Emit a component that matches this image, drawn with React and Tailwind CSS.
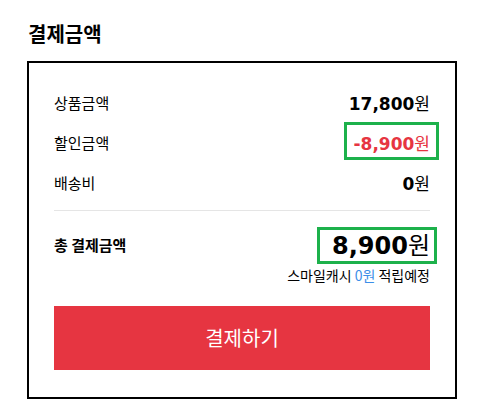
export default function App() {
  const kr = { fontFamily: '"Noto Sans CJK KR", "Noto Sans", sans-serif' };
  const num = { fontFamily: '"DejaVu Sans", "Noto Sans CJK KR", sans-serif' };
  return (
    <div className="w-[483px] h-[414px] bg-white pl-[27px] pt-[19px]" style={kr}>
      <h2 className="text-[20px] font-bold leading-[30px] text-black pl-[1px]">결제금액</h2>
      <div className="mt-[12px] w-[430px] border-2 border-black px-[25px] pt-[20px] pb-[27px]">
        <div className="flex h-[40px] items-center justify-between">
          <span className="text-[15px] text-black">상품금액</span>
          <span className="text-[17px] leading-[20px] font-bold text-black" style={num}>
            17,800<span className="font-normal" style={kr}>원</span>
          </span>
        </div>
        <div className="flex h-[40px] items-center justify-between">
          <span className="text-[15px] text-black">할인금액</span>
          <span className="relative inline-block text-[17px] leading-[20px] font-bold text-[#e63541]" style={num}>
            -8,900<span className="font-normal" style={kr}>원</span>
            <span className="absolute left-[-10px] right-[-9px] top-[-11px] bottom-[-6px] border-[3px] border-[#1db14b]"></span>
          </span>
        </div>
        <div className="flex h-[40px] items-center justify-between">
          <span className="text-[15px] text-black">배송비</span>
          <span className="text-[17px] leading-[20px] font-bold text-black" style={num}>
            0<span className="font-normal" style={kr}>원</span>
          </span>
        </div>
        <div className="mt-[7px] h-px bg-[#e5e5e5]"></div>
        <div className="mt-[16px] flex h-[36px] items-center justify-between">
          <span className="text-[15px] font-bold text-black">총 결제금액</span>
          <span className="relative inline-block text-[24px] leading-[28px] font-bold text-black" style={num}>
            8,900<span className="font-normal" style={kr}>원</span>
            <span className="absolute left-[-15px] right-[-7px] top-[-3px] bottom-[-4px] border-[3px] border-[#1db14b]"></span>
          </span>
        </div>
        <div className="mt-[3px] flex h-[18px] items-center justify-end text-[14px] text-black">
          스마일캐시&nbsp;<span className="text-[#3b8ee8]">0원</span>&nbsp;적립예정
        </div>
        <button className="mt-[22px] flex h-[64px] w-full items-center justify-center bg-[#e63541] text-[20px] text-white">
          결제하기
        </button>
      </div>
    </div>
  );
}
